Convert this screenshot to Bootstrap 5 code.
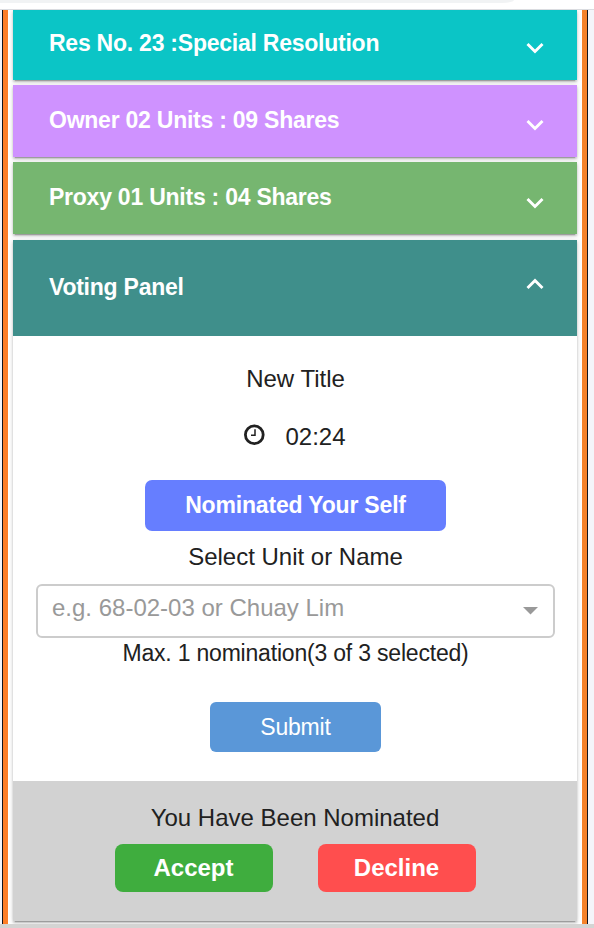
<!DOCTYPE html>
<html lang="en">
<head>
<meta charset="utf-8">
<meta name="viewport" content="width=device-width, initial-scale=1">
<title>Voting Panel</title>
<link href="https://cdn.jsdelivr.net/npm/bootstrap@5.3.0/dist/css/bootstrap.min.css" rel="stylesheet">
<style>
body{font-family:"Liberation Sans",Arial,sans-serif;font-size:24px;line-height:28px;color:#212121;background:#f4f5fa;height:928px;overflow:hidden}
.topbar{height:10px;background:#fff;border-bottom:1px solid #dadce0}
.address{width:514px;height:3px;background:#f1f3f4;border-bottom-right-radius:12px 3px}
.frame{height:914px;margin:0 6px 0 2px;padding:0 5px;border:solid #14141c;border-width:0 1px;background:#fff;box-shadow:inset 5px 0 #fd7e28,inset -5px 0 #f5822a;overflow:hidden}
.stack{padding:0 5px;height:914px}
.panel{box-shadow:0 3px 1px -2px rgba(0,0,0,.2),0 2px 2px rgba(0,0,0,.16),0 1px 5px rgba(0,0,0,.16)}
.bar{height:72px;padding:0 33px 2px 36px;color:#fff;font-weight:700;font-size:23px;letter-spacing:-.24px}
.bar svg{width:18px;height:12px;position:relative;top:5px}
.bar-res{height:70px;background:#0bc5c6;padding-bottom:4px;margin-bottom:5px}
.bar-owner{background:#cf92ff;margin-bottom:5px;padding-bottom:3px}
.bar-proxy{background:#76b670;margin-bottom:6px;padding-bottom:3px}
.bar-proxy svg{top:6px}
.bar-vote{height:96px;background:#3f8f8b}
.bar-vote svg{top:-3px}
.voting{height:445px;padding:29px 22px 0 23px}
.timer{height:28px;margin:30px 0 29px;gap:20px;padding-right:2px}
.timer svg{position:relative;top:-2px}
.btn{--bs-btn-color:#fff;--bs-btn-hover-color:#fff;border:0;padding:0;line-height:28px}
.btn-self{width:301px;height:51px;background:#667eff;border-radius:7px;font-size:23px;letter-spacing:-.18px;padding-bottom:2px}
.select-label{margin:12px 0 13px}
.picker{height:54px;border:2px solid #ccc;border-radius:6px;padding:0 15px 6px 14px;color:#999}
.picker svg{width:15px;height:8px;position:relative;top:3px}
.tight{font-size:23px;letter-spacing:-.2px}
.limit{margin-top:1px}
.btn-send{width:171px;height:50px;background:#5a97d8;border-radius:6px;margin-top:35px}
.nominated{height:140px;background:#d2d2d2;padding-top:23px}
.choices{gap:45px;margin-top:12px}
.choice{width:158px;height:48px;border-radius:8px;font-size:24px}
.btn-yes{background:#3fad3e}
.btn-no{background:#ff4e4e}
.footbar{height:4px;background:#d4d4d3}
</style>
<script src="https://cdn.jsdelivr.net/npm/bootstrap@5.3.0/dist/js/bootstrap.bundle.min.js"></script>
</head>
<body class="d-flex flex-column">
<div class="topbar flex-shrink-0"><div class="address"></div></div>
<main class="frame flex-shrink-0">
<div class="stack d-flex flex-column">
  <section class="panel bar bar-res d-flex align-items-center justify-content-between"><span>Res No. 23 :Special Resolution</span>
    <svg viewBox="0 0 18 12" fill="none" stroke="#fff" stroke-width="2.9"><path d="M1.5 2 9 9.5 16.5 2"/></svg></section>
  <section class="panel bar bar-owner d-flex align-items-center justify-content-between"><span>Owner 02 Units : 09 Shares</span>
    <svg viewBox="0 0 18 12" fill="none" stroke="#fff" stroke-width="2.9"><path d="M1.5 2 9 9.5 16.5 2"/></svg></section>
  <section class="panel bar bar-proxy d-flex align-items-center justify-content-between"><span>Proxy 01 Units : 04 Shares</span>
    <svg viewBox="0 0 18 12" fill="none" stroke="#fff" stroke-width="2.9"><path d="M1.5 2 9 9.5 16.5 2"/></svg></section>
  <section class="panel">
    <div class="bar bar-vote d-flex align-items-center justify-content-between"><span>Voting Panel</span>
      <svg viewBox="0 0 18 12" fill="none" stroke="#fff" stroke-width="2.9"><path d="M1.5 10 9 2.5 16.5 10"/></svg></div>
    <div class="voting bg-white text-center d-flex flex-column align-items-center">
      <div>New Title</div>
      <div class="timer d-flex align-items-center">
        <svg width="22" height="22" viewBox="0 0 22 22" fill="none" stroke="#212121"><circle cx="11.3" cy="10.7" r="8.9" stroke-width="2.8"/><path d="M12 5.3v6H8" stroke-width="1.5"/></svg>
        <span>02:24</span></div>
      <button class="btn btn-self fw-bold" type="button">Nominated Your Self</button>
      <div class="select-label">Select Unit or Name</div>
      <div class="picker w-100 d-flex align-items-center justify-content-between"><span>e.g. 68-02-03 or Chuay Lim</span>
        <svg viewBox="0 0 15 8" fill="#999"><path d="M0 0h15L7.5 7.5z"/></svg></div>
      <div class="tight limit">Max. 1 nomination(3 of 3 selected)</div>
      <button class="btn btn-send tight" type="button">Submit</button>
    </div>
    <div class="nominated text-center">
      <div>You Have Been Nominated</div>
      <div class="choices d-flex justify-content-center">
        <button class="btn choice btn-yes fw-bold" type="button">Accept</button>
        <button class="btn choice btn-no fw-bold" type="button">Decline</button>
      </div>
    </div>
  </section>
</div>
</main>
<div class="footbar flex-shrink-0"></div>
</body>
</html>
